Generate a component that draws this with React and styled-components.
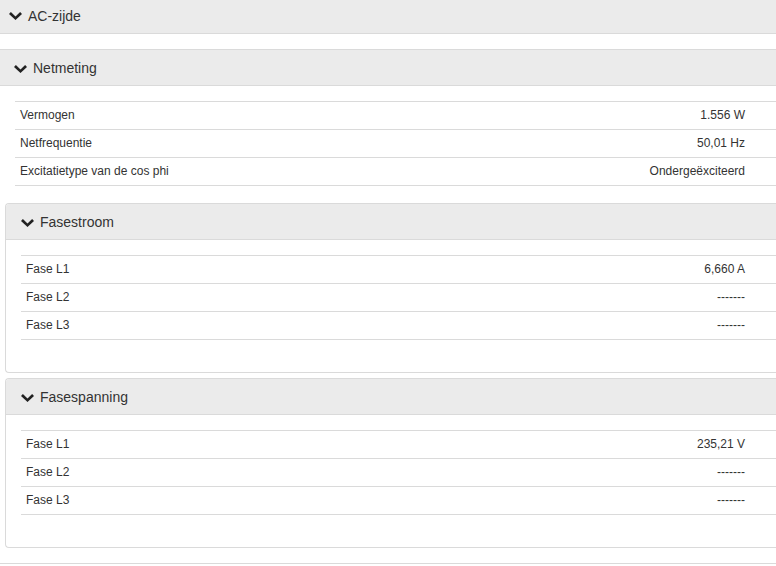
import React from "react";
import styled, { createGlobalStyle } from "styled-components";

const Global = createGlobalStyle`
  html, body { margin: 0; padding: 0; background: #fff; }
  body {
    font-family: "Liberation Sans", Arial, sans-serif;
    color: #333;
    overflow: hidden;
  }
  * { box-sizing: border-box; }
`;

const Page = styled.div`
  width: 776px;
  overflow: hidden;
`;

const SectionHeader = styled.div`
  height: 34px;
  display: flex;
  align-items: center;
  gap: 6px;
  padding: 0 0 2px 9px;
  background: #ebebeb;
  border-bottom: 1px solid #dadada;
  font-size: 14px;
`;

const Panel = styled.section`
  background: #fff;
  border: 1px solid #dadada;
  border-right: none;
  ${(p) =>
    p.$outer
      ? `border-left: none; margin-top: 15px;`
      : `margin-left: 5px; border-radius: 4px 0 0 4px; overflow: hidden;`}
  & + & {
    margin-top: 5px;
  }
`;

const PanelHeading = styled.div`
  height: 36px;
  display: flex;
  align-items: center;
  gap: 6px;
  padding-left: ${(p) => (p.$outer ? "14px" : "15px")};
  background: #ebebeb;
  border-bottom: 1px solid #dadada;
  font-size: 14px;
`;

const PanelBody = styled.div`
  display: flex;
  flex-direction: column;
  padding: 15px 0 15px ${(p) => (p.$outer ? "0" : "15px")};
`;

const Table = styled.table`
  width: ${(p) => (p.$inset ? "calc(100% - 15px)" : "100%")};
  margin: 0 0 17px ${(p) => (p.$inset ? "15px" : "0")};
  border-collapse: collapse;
  font-size: 12px;
  border-bottom: 1px solid #dadada;
`;

const Row = styled.tr`
  border-top: 1px solid #dadada;
`;

const Cell = styled.td`
  padding: 5px 5px;
  line-height: 17px;
  height: 27px;
  text-align: ${(p) => (p.$right ? "right" : "left")};
  ${(p) => (p.$right ? "padding-right: 31px;" : "")}
`;

const ChevronSvg = styled.svg`
  flex: none;
  margin-top: ${(p) => p.$drop || 0}px;
`;

const Chevron = ({ drop }) => (
  <ChevronSvg width="13" height="8" viewBox="0 0 13 8" $drop={drop}>
    <path d="M0 1.9 L1.9 0 L6.5 4.5 L11.1 0 L13 1.9 L6.5 8 Z" fill="#222" />
  </ChevronSvg>
);

const DataTable = ({ rows, inset }) => (
  <Table $inset={inset}>
    <tbody>
      {rows.map(([k, v]) => (
        <Row key={k}>
          <Cell>{k}</Cell>
          <Cell $right>{v}</Cell>
        </Row>
      ))}
    </tbody>
  </Table>
);

const SubPanel = ({ title, rows }) => (
  <Panel>
    <PanelHeading>
      <Chevron drop={2} />
      <span>{title}</span>
    </PanelHeading>
    <PanelBody>
      <DataTable rows={rows} />
    </PanelBody>
  </Panel>
);

export default function App() {
  return (
    <Page>
      <Global />
      <SectionHeader>
        <Chevron />
        <span>AC-zijde</span>
      </SectionHeader>
      <Panel $outer>
        <PanelHeading $outer>
          <Chevron drop={2} />
          <span>Netmeting</span>
        </PanelHeading>
        <PanelBody $outer>
          <DataTable
            inset
            rows={[
              ["Vermogen", "1.556 W"],
              ["Netfrequentie", "50,01 Hz"],
              ["Excitatietype van de cos phi", "Ondergeëxciteerd"],
            ]}
          />
          <SubPanel
            title="Fasestroom"
            rows={[
              ["Fase L1", "6,660 A"],
              ["Fase L2", "-------"],
              ["Fase L3", "-------"],
            ]}
          />
          <SubPanel
            title="Fasespanning"
            rows={[
              ["Fase L1", "235,21 V"],
              ["Fase L2", "-------"],
              ["Fase L3", "-------"],
            ]}
          />
        </PanelBody>
      </Panel>
    </Page>
  );
}
